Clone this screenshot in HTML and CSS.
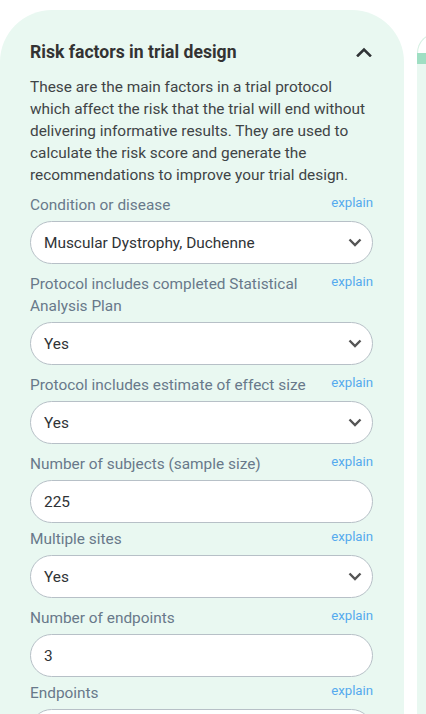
FILE: index.html
```html
<!DOCTYPE html>
<html>
<head>
<meta charset="utf-8">
<link rel="stylesheet" href="styles.css">
</head>
<body>
<div class="row">
  <section class="card">
    <div class="card-head">
      <h2 class="title">Risk factors in trial design</h2>
      <svg class="collapse" width="16" height="10" viewBox="0 0 16 10"><path d="M2 8.5 L8 2.5 L14 8.5" fill="none" stroke="#2f3336" stroke-width="2.6" stroke-linecap="square"/></svg>
    </div>
    <p class="desc">These are the main factors in a trial protocol which affect the risk that the trial will end without delivering informative results. They are used to calculate the risk score and generate the recommendations to improve your trial design.</p>

    <div class="field sel">
      <div class="lab"><span class="lab-text">Condition or disease</span><a class="explain">explain</a></div>
      <div class="box"><span>Muscular Dystrophy, Duchenne</span><svg class="chev" width="14" height="9" viewBox="0 0 14 9"><path d="M1.5 1.5 L7 7 L12.5 1.5" fill="none" stroke="#555" stroke-width="2.4"/></svg></div>
    </div>
    <div class="field sel">
      <div class="lab"><span class="lab-text">Protocol includes completed Statistical Analysis Plan</span><a class="explain">explain</a></div>
      <div class="box"><span>Yes</span><svg class="chev" width="14" height="9" viewBox="0 0 14 9"><path d="M1.5 1.5 L7 7 L12.5 1.5" fill="none" stroke="#555" stroke-width="2.4"/></svg></div>
    </div>
    <div class="field sel">
      <div class="lab"><span class="lab-text">Protocol includes estimate of effect size</span><a class="explain">explain</a></div>
      <div class="box"><span>Yes</span><svg class="chev" width="14" height="9" viewBox="0 0 14 9"><path d="M1.5 1.5 L7 7 L12.5 1.5" fill="none" stroke="#555" stroke-width="2.4"/></svg></div>
    </div>
    <div class="field inp">
      <div class="lab"><span class="lab-text">Number of subjects (sample size)</span><a class="explain">explain</a></div>
      <div class="box"><span>225</span></div>
    </div>
    <div class="field sel">
      <div class="lab"><span class="lab-text">Multiple sites</span><a class="explain">explain</a></div>
      <div class="box"><span>Yes</span><svg class="chev" width="14" height="9" viewBox="0 0 14 9"><path d="M1.5 1.5 L7 7 L12.5 1.5" fill="none" stroke="#555" stroke-width="2.4"/></svg></div>
    </div>
    <div class="field inp">
      <div class="lab"><span class="lab-text">Number of endpoints</span><a class="explain">explain</a></div>
      <div class="box"><span>3</span></div>
    </div>
    <div class="field sel">
      <div class="lab"><span class="lab-text">Endpoints</span><a class="explain">explain</a></div>
      <div class="box"><span></span></div>
    </div>
  </section>
  <section class="card2">
    <div class="card2-top"></div>
    <div class="card2-band"></div>
    <div class="card2-body"></div>
  </section>
</div>
</body>
</html>
```

FILE: styles.css
```css
html, body {
  margin: 0;
  padding: 0;
  background: #ffffff;
  font-family: Roboto, "Liberation Sans", sans-serif;
  overflow: hidden;
}
.row {
  display: flex;
  gap: 13px;
  height: 714px;
  overflow: hidden;
}
.card {
  flex: 0 0 404px;
  box-sizing: border-box;
  margin-top: 10px;
  background: #e9f8f1;
  border-radius: 52px 52px 0 0;
  padding: 29px 31px 0 30px;
  height: 760px;
}
.card-head {
  display: flex;
  align-items: center;
  justify-content: space-between;
  height: 26px;
}
.title {
  margin: 0;
  font-size: 17.6px;
  font-weight: 700;
  color: #333333;
  line-height: 26px;
}
.collapse {
  margin-right: 1px;
}
.desc {
  margin: 11px 0 8px 0;
  font-size: 15.4px;
  line-height: 22px;
  color: #3f4446;
}
.field.sel { margin-bottom: 9px; }
.field.inp { margin-bottom: 5px; }
.lab {
  display: flex;
  justify-content: space-between;
  align-items: flex-start;
  gap: 20px;
  margin-bottom: 5px;
}
.lab-text {
  font-size: 15.4px;
  line-height: 22px;
  color: #68798a;
}
.explain {
  font-size: 13.2px;
  line-height: 18px;
  color: #55aaee;
  white-space: nowrap;
  cursor: pointer;
}
.box {
  box-sizing: border-box;
  height: 43px;
  background: #ffffff;
  border: 1px solid #b7c0c7;
  border-radius: 22px;
  display: flex;
  align-items: center;
  justify-content: space-between;
  padding: 0 10px 0 13px;
  font-size: 15.4px;
  color: #2f3336;
}
.chev {
  display: block;
}
.card2 {
  flex: 0 0 400px;
  margin-top: 33px;
  display: flex;
  flex-direction: column;
}
.card2-top {
  height: 20px;
  box-sizing: border-box;
  border-top-left-radius: 22px;
  border-left: 1px solid #d6f0e3;
  border-top: 1px solid #d6f0e3;
  background: #ffffff;
}
.card2-band {
  height: 11px;
  background: #9fdfc3;
}
.card2-body {
  flex: 1;
  background: #e9f8f1;
}
```
